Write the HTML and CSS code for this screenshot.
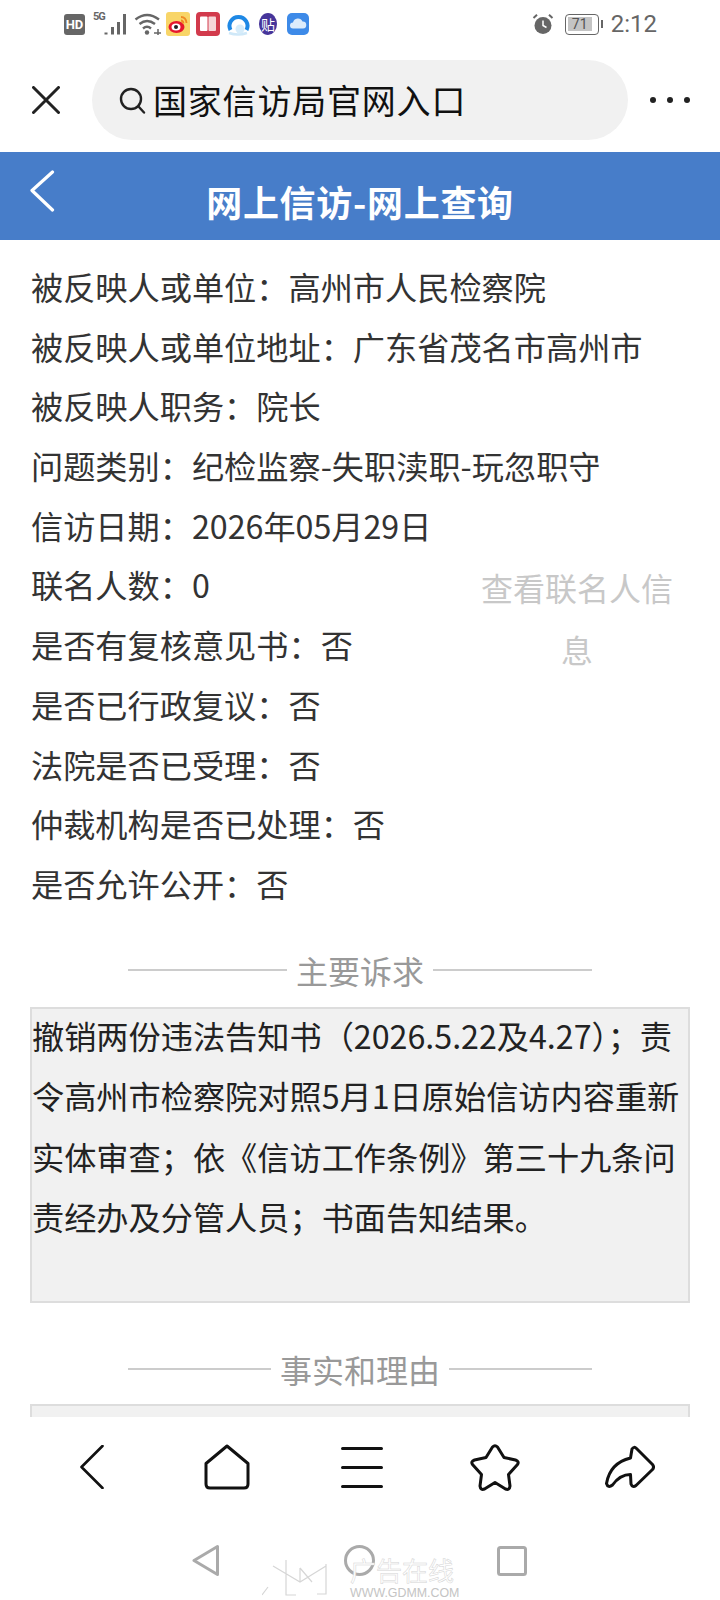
FILE: index.html
```html
<!DOCTYPE html>
<html lang="zh-CN">
<head>
<meta charset="utf-8">
<title>网上信访-网上查询</title>
<link rel="stylesheet" href="styles.css">
</head>
<body>
<div class="page">
  <div class="status">
    <div class="status-left">
      <span class="hd">HD</span>
      <span class="signal"><span class="five-g">5G</span>
        <svg class="bars" width="24" height="24" viewBox="0 0 24 24"><path d="M2 20.500v2M8.500 15v7.500M14.500 10v12.500M20.500 2v20.500" stroke="#666" stroke-width="3" fill="none"/></svg>
      </span>
      <svg class="wifi" width="28" height="24" viewBox="0 0 28 24"><path d="M1.500 7.500Q13-1.500 25 7.500M5.500 12Q13 6 21 12M9 16.500Q13 13 17 16.500" stroke="#666" stroke-width="2.400" fill="none"/><circle cx="13" cy="20.500" r="2.200" fill="#666"/><path d="M20 21h7M24 17v6" stroke="#666" stroke-width="1.500"/></svg>
      <svg class="app-weibo" width="24" height="24" viewBox="0 0 24 24"><rect width="24" height="24" rx="3" fill="#f8d568"/><ellipse cx="10.500" cy="15" rx="8" ry="6" fill="#e6162d"/><ellipse cx="10" cy="15" rx="4.500" ry="3.500" fill="#fff"/><circle cx="10" cy="15" r="2" fill="#222"/><path d="M15 5q5 0 5.500 6M15 8.500q2 0 2.500 3" stroke="#f08a24" stroke-width="1.800" fill="none"/></svg>
      <svg class="app-book" width="24" height="24" viewBox="0 0 24 24"><rect width="24" height="24" rx="4" fill="#d23a4c"/><rect x="4" y="4.500" width="7.500" height="14.500" rx="1" fill="#fff"/><rect x="12.500" y="4.500" width="7.500" height="14.500" rx="1" fill="#f6d5d8"/></svg>
      <svg class="app-ring" width="24" height="24" viewBox="0 0 24 24"><path d="M4.500 18A9 9 0 1 1 20.500 18" stroke="#1e88e5" stroke-width="4" fill="none"/><path d="M3 21Q12 24 21 21" stroke="#cfe8f8" stroke-width="2.500" fill="none"/><circle cx="14" cy="17" r="4.500" fill="#d6ecfa"/></svg>
      <span class="tie">贴</span>
      <svg class="app-cloud" width="22" height="24" viewBox="0 0 22 24"><rect y="1" width="22" height="22" rx="5" fill="#3d8ae8"/><path d="M6 16.500a3 3 0 0 1 0-6 5 5 0 0 1 9.500-1 3.500 3.500 0 0 1 .5 7z" fill="#dcebfb"/></svg>
    </div>
    <div class="status-right">
      <svg width="22" height="22" viewBox="0 0 22 22"><circle cx="11" cy="12.500" r="8.500" fill="#666"/><path d="M11 7.500v5l3.500 2" stroke="#fff" stroke-width="1.500" fill="none"/><path d="M1.500 5L5 1.800M20.500 5L17 1.800" stroke="#666" stroke-width="2"/></svg>
      <span class="battery"><span class="battery-level">71</span></span>
      <span class="time">2:12</span>
    </div>
  </div>

  <div class="toolbar">
    <svg class="close" width="28" height="28" viewBox="0 0 28 28"><path d="M1.500 1.500L26.500 26.500M26.500 1.500L1.500 26.500" stroke="#222" stroke-width="3" fill="none" stroke-linecap="round"/></svg>
    <div class="search">
      <svg width="27" height="27" viewBox="0 0 27 27"><circle cx="12" cy="12" r="10" stroke="#222" stroke-width="2.400" fill="none"/><path d="M19.500 19.500L25 25.500" stroke="#222" stroke-width="2.400" stroke-linecap="round"/></svg>
      <span class="search-text">国家信访局官网入口</span>
    </div>
    <div class="dots"><i></i><i></i><i></i></div>
  </div>

  <header class="head">
    <svg class="head-back" width="26" height="42" viewBox="0 0 26 42"><path d="M23.500 2L3 20.500L23.500 40" stroke="#fff" stroke-width="3.200" fill="none" stroke-linecap="round" stroke-linejoin="round"/></svg>
    <h1 class="head-title">网上信访-网上查询</h1>
  </header>

  <main class="content">
    <div class="info">
      <div class="row">被反映人或单位：高州市人民检察院</div>
      <div class="row">被反映人或单位地址：广东省茂名市高州市</div>
      <div class="row">被反映人职务：院长</div>
      <div class="row">问题类别：纪检监察-失职渎职-玩忽职守</div>
      <div class="row">信访日期：2026年05月29日</div>
      <a class="cosign">查看联名人信息</a>
      <div class="row">联名人数：0</div>
      <div class="row">是否有复核意见书：否</div>
      <div class="row">是否已行政复议：否</div>
      <div class="row">法院是否已受理：否</div>
      <div class="row">仲裁机构是否已处理：否</div>
      <div class="row">是否允许公开：否</div>
    </div>
    <div class="divider"><span>主要诉求</span></div>
    <div class="box"><p class="box-text">撤销两份违法告知书（2026.5.22及4.27）；责令高州市检察院对照5月1日原始信访内容重新实体审查；依《信访工作条例》第三十九条问责经办及分管人员；书面告知结果。</p></div>
    <div class="divider second"><span>事实和理由</span></div>
    <div class="box"></div>
  </main>

  <nav class="bottom">
    <div class="bottom-row">
      <svg width="24" height="44" viewBox="0 0 24 44"><path d="M22.500 1L1.500 22L22.500 43" stroke="#111" stroke-width="2.600" fill="none" stroke-linecap="round" stroke-linejoin="round"/></svg>
      <svg width="46" height="46" viewBox="0 0 46 46"><path d="M23 2L44 19.500V40Q44 44 40 44H6Q2 44 2 40V19.500Z" stroke="#111" stroke-width="3" fill="none" stroke-linejoin="round"/></svg>
      <svg width="42" height="42" viewBox="0 0 42 42"><path d="M1.500 2.500H40.500M1.500 21.500H40.500M1.500 40.500H40.500" stroke="#111" stroke-width="3" fill="none" stroke-linecap="round"/></svg>
      <svg class="nudge" width="50" height="47" viewBox="0 0 50 47"><path d="M22.500 3Q25 0.500 27.500 3L34 13.500L45.500 16Q49.500 17.500 47.500 20.500L38.500 30.500L40 42Q39.500 46.500 35.500 45L25 38.500L14.500 45Q10.500 46.500 10 42L11.500 30.500L2.500 20.500Q0.500 17.500 4.500 16L16 13.500Z" stroke="#111" stroke-width="3" fill="none" stroke-linejoin="round"/></svg>
      <svg class="nudge" width="50" height="44" viewBox="0 0 50 44"><path d="M27 4Q29 1 31.500 3.500L47.500 19.500Q49.500 22 47.500 24.500L31 40.500Q27.500 43 26 39L25.500 29.500Q15 29.500 7.500 40Q3 43.500 1.500 38.500Q5 18 25.500 13Z" stroke="#111" stroke-width="3" fill="none" stroke-linejoin="round"/></svg>
    </div>
    <div class="sys-row">
      <svg width="28" height="33" viewBox="0 0 28 33"><path d="M25.500 2.500V30.500L2 16.500Z" stroke="#aaa" stroke-width="3" fill="none" stroke-linejoin="round"/></svg>
      <svg width="31" height="31" viewBox="0 0 31 31"><circle cx="15.500" cy="15.500" r="14" stroke="#aaa" stroke-width="3" fill="none"/></svg>
      <svg class="sys-square" width="30" height="30" viewBox="0 0 30 30"><rect x="1.500" y="1.500" width="27" height="27" rx="2" stroke="#aaa" stroke-width="3" fill="none"/></svg>
    </div>
  </nav>

  <div class="watermark">
    <svg class="wm-logo" width="75" height="38" viewBox="0 0 75 38"><path d="M11 6L38 22L64 6M24 0V35H34M64 4V34H55M38 8V22M38 8L50 22M0 35L6 27" stroke="#d6d6d6" stroke-width="1.200" fill="none"/></svg>
    <div class="wm-text">
      <span class="wm-name">广告在线</span>
      <span class="wm-url">WWW.GDMM.COM</span>
    </div>
  </div>
</div>
</body>
</html>
```
FILE: styles.css
```css
* { box-sizing: border-box; }
html, body { margin: 0; padding: 0; background: #fff; }
body { font-family: "Noto Sans CJK SC", "Noto Sans", sans-serif; }
.page {
  position: relative;
  width: 720px;
  height: 1600px;
  display: flex;
  flex-direction: column;
  overflow: hidden;
  background: #fff;
}

/* status bar */
.status {
  height: 48px;
  flex: none;
  display: flex;
  align-items: center;
  justify-content: space-between;
  padding: 0 63px 0 64px;
  color: #666;
}
.status-left, .status-right { display: flex; align-items: center; }
.hd {
  width: 21px;
  height: 21px;
  border-radius: 3px;
  background: #666;
  color: #fff;
  font: bold 13px/21px "Roboto", sans-serif;
  text-align: center;
}
.signal { display: flex; align-items: flex-start; margin-left: 8px; height: 24px; }
.five-g { width: 11px; font: bold 11px/12px "Roboto", sans-serif; letter-spacing: -1px; margin-top: -1px; }
.wifi { margin-left: 6px; }
.app-weibo { margin-left: 4px; }
.app-book { margin-left: 6px; }
.app-ring { margin-left: 6px; }
.app-cloud { margin-left: 10px; }
.tie {
  width: 18px;
  height: 22px;
  margin-left: 9px;
  border-radius: 50%;
  background: #46359a;
  color: #fff;
  font-size: 14px;
  line-height: 22px;
  text-align: center;
}
.battery {
  position: relative;
  width: 34px;
  height: 21px;
  margin-left: 11px;
  padding: 2px;
  border: 1.500px solid #666;
  border-radius: 4px;
}
.battery::after {
  content: "";
  position: absolute;
  right: -5px;
  top: 5px;
  width: 2px;
  height: 8px;
  background: #666;
}
.battery-level {
  display: block;
  width: 24px;
  height: 14px;
  background: #c4c4c4;
  color: #555;
  font: 14px/14px "Roboto", sans-serif;
  text-align: center;
}
.time { margin-left: 12px; font: 24px/28px "Roboto", sans-serif; color: #666; }

/* browser toolbar */
.toolbar {
  height: 104px;
  flex: none;
  display: flex;
  align-items: center;
  padding: 0 0 0 32px;
}
.search {
  width: 536px;
  height: 80px;
  margin-left: 32px;
  padding-left: 27px;
  display: flex;
  align-items: center;
  gap: 7px;
  border-radius: 40px;
  background: #f1f1f1;
}
.search-text { font-size: 34px; line-height: 48px; letter-spacing: .8px; color: #111; }
.dots { display: flex; gap: 11px; margin-left: 22px; }
.dots i { width: 6px; height: 6px; border-radius: 50%; background: #222; }

/* page header */
.head {
  position: relative;
  height: 88px;
  flex: none;
  background: #477dc9;
  text-align: center;
}
.head-back { position: absolute; left: 29px; top: 18px; }
.head-title {
  margin: 0;
  padding-top: 22px;
  font-size: 36px;
  line-height: 54px;
  font-weight: 700;
  letter-spacing: .7px;
  color: #fff;
}

/* content */
.content { flex: 1; min-height: 0; overflow: hidden; padding: 17px 30px 0; }
.info { color: #333; font-size: 32.200px; padding-left: 1px; }
.row { height: 59.700px; line-height: 59.700px; }
.cosign {
  float: right;
  width: 192px;
  margin: 1px 17px 0 0;
  font-size: 32px;
  line-height: 62px;
  text-align: center;
  color: #c8c8c8;
}
.divider {
  width: 464px;
  margin: 31px auto 0;
  display: flex;
  align-items: center;
  gap: 9px;
  font-size: 32px;
  line-height: 50px;
  color: #999;
}
.divider::before, .divider::after {
  content: "";
  flex: 1;
  height: 2px;
  background: #ccc;
}
.divider.second { margin-top: 41px; }
.box {
  min-height: 296px;
  margin-top: 12px;
  border: 2px solid #ddd;
  background: #f1f1f1;
  font-size: 32.200px;
  color: #222;
}
.divider.second + .box { margin-top: 10px; }
.box-text { margin: -4px 0 0; line-height: 60.500px; }

/* bottom nav */
.bottom { height: 183px; flex: none; background: #fff; }
.bottom-row {
  height: 100px;
  padding-left: 24px;
  display: grid;
  grid-template-columns: repeat(5, 135px);
  align-items: center;
  justify-items: center;
}
.bottom-row .nudge { margin-right: 4px; }
.sys-row {
  margin-top: 27px;
  padding-left: 192px;
  display: flex;
  align-items: center;
  gap: 124px;
}
.sys-row .sys-square { margin-left: -2px; }

/* watermark */
.watermark {
  position: absolute;
  left: 262px;
  top: 1558px;
  display: flex;
  gap: 13px;
  pointer-events: none;
}
.wm-logo { margin-top: 2px; }
.wm-text { display: flex; flex-direction: column; width: 112px; }
.wm-name {
  height: 29px;
  font-family: "Liberation Sans", "Noto Sans CJK SC", sans-serif;
  font-size: 26px;
  line-height: 29px;
  white-space: nowrap;
  color: #fff;
  -webkit-text-stroke: .5px #d4d4d4;
}
.wm-url {
  height: 13px;
  font: 12.400px/13px "Liberation Sans", sans-serif;
  white-space: nowrap;
  color: #c4c4c4;
}
```
